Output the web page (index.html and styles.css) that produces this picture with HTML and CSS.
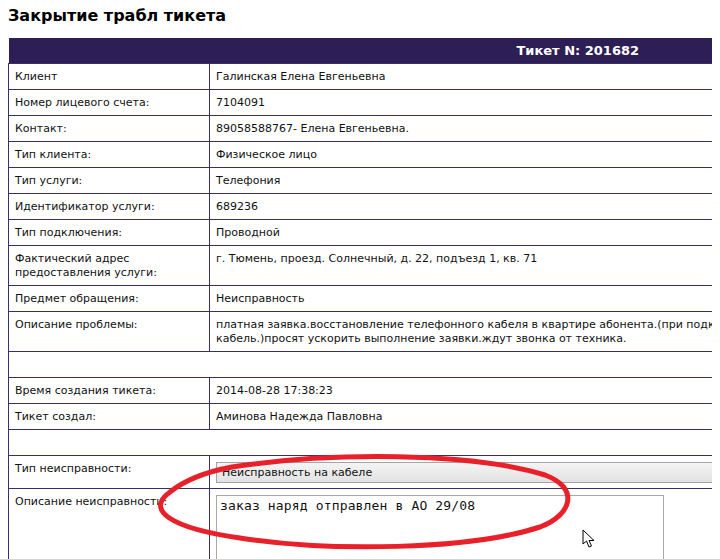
FILE: index.html
```html
<!DOCTYPE html>
<html lang="ru">
<head>
<meta charset="utf-8">
<title>Закрытие трабл тикета</title>
<link rel="stylesheet" href="styles.css">
</head>
<body>
<h1 class="title">Закрытие трабл тикета</h1>
<div class="frame">
<table class="ticket">
  <colgroup><col class="c-label"><col class="c-value"></colgroup>
  <tr class="head"><th colspan="2"><span class="head-text">Тикет N: 201682</span></th></tr>
  <tr><td>Клиент</td><td>Галинская Елена Евгеньевна</td></tr>
  <tr><td>Номер лицевого счета:</td><td>7104091</td></tr>
  <tr><td>Контакт:</td><td>89058588767- Елена Евгеньевна.</td></tr>
  <tr><td>Тип клиента:</td><td>Физическое лицо</td></tr>
  <tr><td>Тип услуги:</td><td>Телефония</td></tr>
  <tr><td>Идентификатор услуги:</td><td>689236</td></tr>
  <tr><td>Тип подключения:</td><td>Проводной</td></tr>
  <tr><td>Фактический адрес<br>предоставления услуги:</td><td>г. Тюмень, проезд. Солнечный, д. 22, подъезд 1, кв. 71</td></tr>
  <tr><td>Предмет обращения:</td><td>Неисправность</td></tr>
  <tr><td>Описание проблемы:</td><td class="nowrap">платная заявка.восстановление телефонного кабеля в квартире абонента.(при подкл.<br>кабель.)просят ускорить выполнение заявки.ждут звонка от техника.</td></tr>
  <tr class="empty"><td colspan="2"></td></tr>
  <tr><td>Время создания тикета:</td><td>2014-08-28 17:38:23</td></tr>
  <tr><td>Тикет создал:</td><td>Аминова Надежда Павловна</td></tr>
  <tr class="empty"><td colspan="2"></td></tr>
  <tr><td>Тип неисправности:</td><td><div class="select">Неисправность на кабеле</div></td></tr>
  <tr><td>Описание неисправности:</td><td><div class="textarea">заказ наряд отправлен в АО 29/08</div></td></tr>
</table>
</div>
<svg class="mark" width="720" height="559" viewBox="0 0 720 559">
  <path d="M232 467 C 330 452, 470 452, 545 475 C 580 488, 572 515, 540 527 C 470 550, 330 552, 240 538 C 170 528, 145 510, 170 492 C 185 480, 205 472, 232 467 Z" fill="none" stroke="#e8202a" stroke-width="5"/>
</svg>
<svg class="cursor" width="14" height="20" viewBox="0 0 14 20">
  <path d="M1 1 L1 15 L4.5 12 L7 18 L9.5 17 L7 11.5 L12 11.5 Z" fill="#fff" stroke="#000" stroke-width="1" stroke-linejoin="round"/>
</svg>
</body>
</html>
```
FILE: styles.css
```css
html { overflow: hidden; }
body {
  margin: 8px;
  font-family: "DejaVu Sans", Verdana, sans-serif;
  font-size: 11px;
  color: #111;
  background: #fff;
}
.title {
  font-size: 16px;
  line-height: 20px;
  font-weight: bold;
  margin: -2px 0 12px 0;
  color: #000;
}
.frame {
  width: 730px;
  height: 521px;
  overflow: hidden;
}
.ticket {
  border-collapse: collapse;
  width: 1100px;
  table-layout: fixed;
}
.c-label { width: 201px; }
.ticket td {
  border: 1px solid #35306c;
  padding: 6px 6px 5px 6px;
  line-height: 14px;
  vertical-align: top;
  text-align: left;
}
.head th {
  background: #2d1f56;
  color: #fff;
  height: 25px;
  padding: 0;
  text-align: left;
  font-size: 13px;
  font-weight: bold;
  border: 0;
  border-bottom: 1px solid #35306c;
}
.head-text { padding-left: 508px; }
.empty td { height: 14px; }
.nowrap { white-space: nowrap; overflow: hidden; }
.select {
  height: 19px;
  line-height: 19px;
  border: 1px solid #a5a5a5;
  background: linear-gradient(#f4f4f4, #e2e2e2);
  padding-left: 5px;
  color: #111;
}
.textarea {
  width: 440px;
  height: 80px;
  border: 1px solid #a9a9a9;
  padding: 2px 3px;
  font-family: "DejaVu Sans Mono", monospace;
  font-size: 13px;
  line-height: 16px;
  letter-spacing: 0.15px;
  color: #111;
}
.mark { position: absolute; left: 0; top: 0; pointer-events: none; }
.cursor { position: absolute; left: 582px; top: 529px; }
```
